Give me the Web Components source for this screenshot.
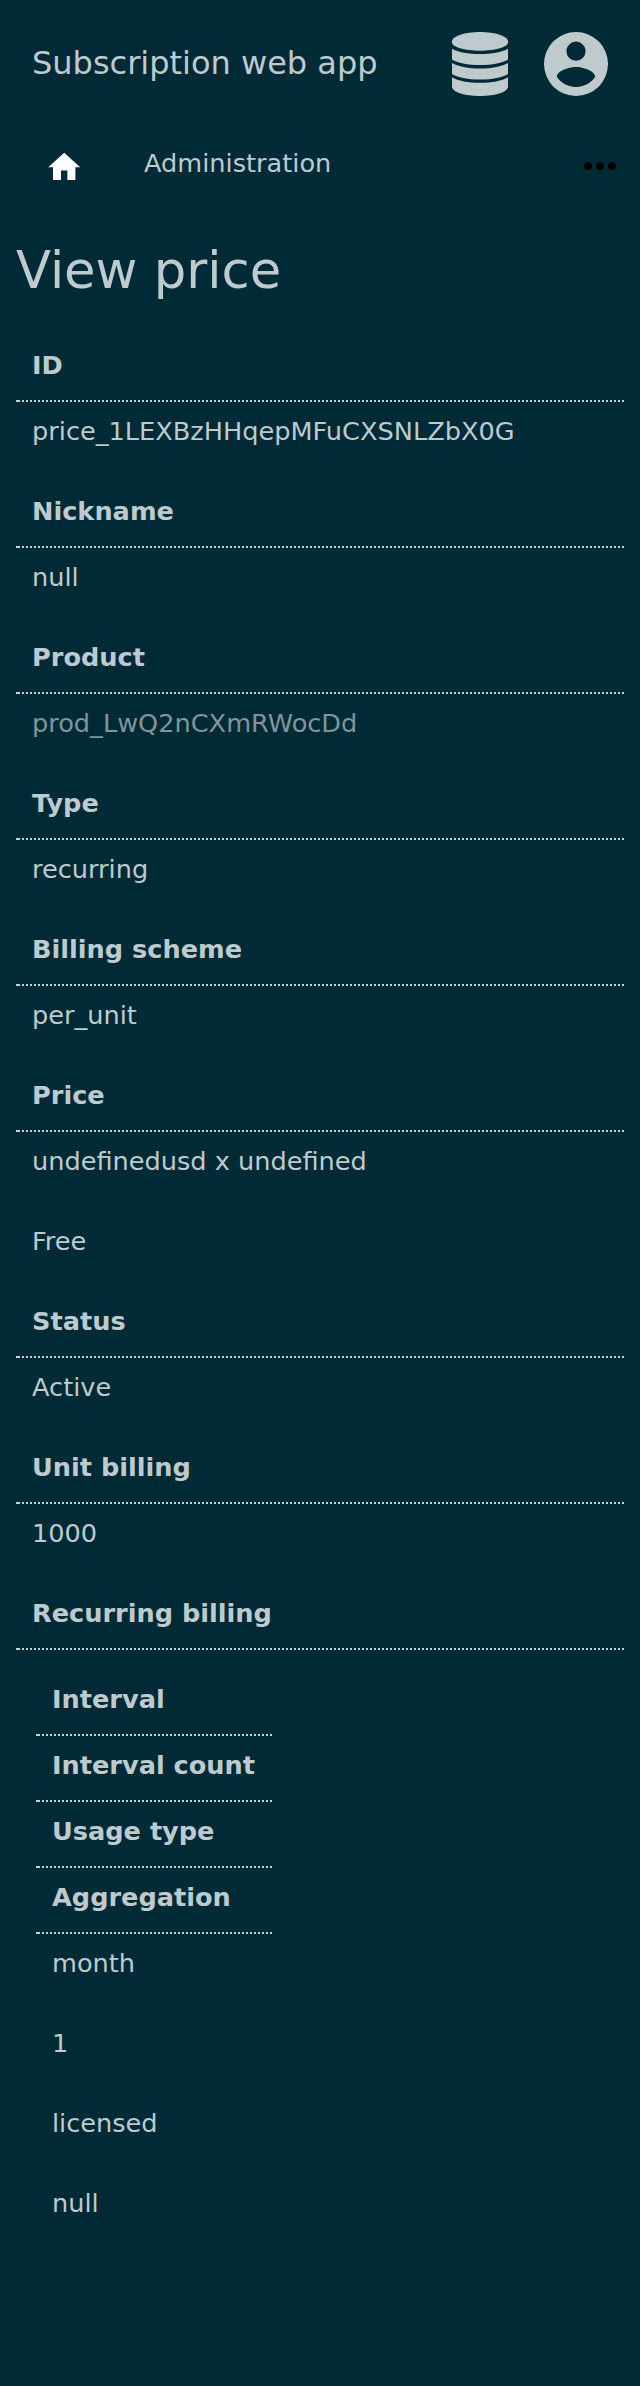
<!DOCTYPE html>
<html lang="en">
<head>
<meta charset="utf-8">
<title>Subscription web app</title>
<style>
body { margin: 0; min-height: 2386px; background: #002b36; color: #bfcacd; font: 25.6px/26px "DejaVu Sans", sans-serif; }
</style>
</head>
<body>
<app-header>Subscription web app</app-header>
<app-nav>Administration</app-nav>
<price-view>
  <span slot="title">View price</span>
  <price-field label="ID"><field-value>price_1LEXBzHHqepMFuCXSNLZbX0G</field-value></price-field>
  <price-field label="Nickname"><field-value>null</field-value></price-field>
  <price-field label="Product"><field-value link>prod_LwQ2nCXmRWocDd</field-value></price-field>
  <price-field label="Type"><field-value>recurring</field-value></price-field>
  <price-field label="Billing scheme"><field-value>per_unit</field-value></price-field>
  <price-field label="Price"><field-value>undefinedusd x undefined</field-value><field-value>Free</field-value></price-field>
  <price-field label="Status"><field-value>Active</field-value></price-field>
  <price-field label="Unit billing"><field-value>1000</field-value></price-field>
  <price-field label="Recurring billing">
    <nested-fields>
      <price-field label="Interval"></price-field>
      <price-field label="Interval count"></price-field>
      <price-field label="Usage type"></price-field>
      <price-field label="Aggregation"></price-field>
      <field-value>month</field-value>
      <field-value>1</field-value>
      <field-value>licensed</field-value>
      <field-value>null</field-value>
    </nested-fields>
  </price-field>
</price-view>
<script>
const define = (name, html, init) => customElements.define(name, class extends HTMLElement {
  constructor() {
    super();
    this.attachShadow({ mode: "open" }).innerHTML = html;
  }
  connectedCallback() { if (init) init(this); }
});

define("app-header", `<style>
  :host { display: flex; align-items: center; box-sizing: border-box; height: 128px; padding: 0 32px; font-size: 32px; line-height: 38px; }
  h1 { flex: 1; margin: 0 0 2px; font: inherit; }
  svg { display: block; fill: currentColor; }
  .db { margin-right: 36px; }
</style>
<h1><slot></slot></h1>
<svg class="db" width="56" height="64" viewBox="0 0 56 64">
  <path d="M0 9.4C0 4.2 12.5 0 28 0S56 4.2 56 9.4V10.6C56 15 43.5 18.8 28 18.8S0 15 0 10.600Z"/>
  <path d="M0 16.700C6 20 16 22 28 22S50 20 56 16.700V27.500C51 31 40 33 28 33S5 31 0 27.500Z"/>
  <path d="M0 31C6 34.500 16 36.500 28 36.500S50 34.500 56 31V42C51 45.500 40 47.500 28 47.500S5 45.500 0 42Z"/>
  <path d="M0 45.300C6 49 16 50.800 28 50.800S50 49 56 45.300V54.500C56 60 43.500 64 28 64S0 60 0 54.500Z"/>
</svg>
<svg width="64" height="64" viewBox="2 2 20 20">
  <path d="M12 19.200C9.500 19.200 7.290 17.920 6 16C6.030 14 10 12.900 12 12.900S17.970 14 18 16C16.710 17.920 14.500 19.200 12 19.200M12 5A3 3 0 0 1 15 8A3 3 0 0 1 12 11A3 3 0 0 1 9 8A3 3 0 0 1 12 5M12 2A10 10 0 0 0 2 12A10 10 0 0 0 12 22A10 10 0 0 0 22 12A10 10 0 0 0 12 2Z"/>
</svg>`);

define("app-nav", `<style>
  :host { display: flex; align-items: flex-start; box-sizing: border-box; height: 80px; padding: 20px 24px 0 44.800px; }
  svg { display: block; }
  .label { flex: 1; margin: 2px 0 0 60.800px; }
  .more { margin-top: 14px; }
</style>
<svg width="38.400" height="38.400" viewBox="0 0 24 24" fill="#fff"><path d="M10 20v-6h4v6h5v-8h3L12 3 2 12h3v8z"/></svg>
<span class="label"><slot></slot></span>
<svg class="more" width="38" height="8" viewBox="0 0 38 8"><circle cx="10" cy="4" r="4"/><circle cx="22" cy="4" r="4"/><circle cx="34" cy="4" r="4"/></svg>`);

define("price-view", `<style>
  :host { display: block; padding: 31px 16px 0; }
  h2 { margin: 0 0 35px; font-size: 51.200px; line-height: 62px; font-weight: 400; }
</style>
<h2><slot name="title"></slot></h2><slot></slot>`);

define("price-field", `<style>
  :host { display: block; --rule: #c6d1d0; }
  .label {
    padding: 16px 16px 24px; font-weight: 700;
    background:
      linear-gradient(var(--rule), var(--rule)) 0 100% / 2px 2px no-repeat,
      linear-gradient(90deg, transparent 50%, var(--rule) 50%) 0 100% / 4px 2px repeat-x;
  }
</style>
<div class="label"></div><slot></slot>`, el => {
  el.shadowRoot.querySelector(".label").textContent = el.getAttribute("label");
});

define("field-value", `<style>
  :host { display: block; padding: 16px 16px 38px; }
  :host([link]) { color: #7f959a; }
</style><slot></slot>`);

define("nested-fields", `<style>
  :host { display: block; box-sizing: border-box; width: 276px; padding: 20px; }
</style><slot></slot>`);
</script>
</body>
</html>
